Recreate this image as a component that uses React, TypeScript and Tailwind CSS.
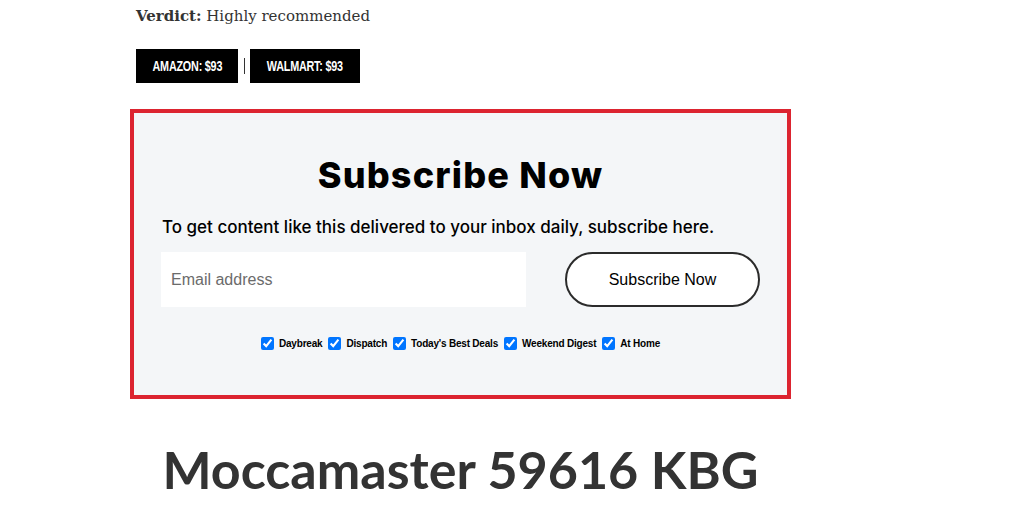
import { useState } from 'react';

const lists = ['Daybreak', 'Dispatch', "Today's Best Deals", 'Weekend Digest', 'At Home'];

function Newsletter() {
  const [checked, setChecked] = useState<Record<string, boolean>>(
    Object.fromEntries(lists.map((l) => [l, true]))
  );

  return (
    <div className="border-4 border-[#dc2430] bg-[#f4f6f8] px-[27px] pt-[40px] pb-[44px]">
      <h2 className="text-center text-[36px] leading-[44px] font-extrabold text-black tracking-[1.2px] [font-family:Inter,sans-serif]">
        Subscribe Now
      </h2>
      <p className="mt-[19px] pl-[1px] text-[17px] leading-[22px] font-medium text-black [font-family:Inter,sans-serif]">
        To get content like this delivered to your inbox daily, subscribe here.
      </p>
      <div className="mt-[14px] flex items-center justify-between">
        <input
          type="email"
          placeholder="Email address"
          className="h-[55px] w-[365px] bg-white px-[10px] text-[16px] text-[#333] placeholder:text-[#6b6b6b] outline-none [font-family:'Liberation_Sans',sans-serif]"
        />
        <button className="h-[55px] w-[195px] rounded-full border-2 border-[#2b2b2b] bg-white text-[16px] text-black [font-family:'Liberation_Sans',sans-serif]">
          Subscribe Now
        </button>
      </div>
      <div className="mt-[29px] flex items-center justify-center gap-[6px]">
        {lists.map((l) => (
          <label key={l} className="flex items-center gap-[5px] cursor-pointer">
            <input
              type="checkbox"
              checked={checked[l]}
              onChange={() => setChecked({ ...checked, [l]: !checked[l] })}
              className="m-0 h-[13px] w-[13px] accent-[#0075ff]"
            />
            <span className="text-[10px] font-bold text-black tracking-[-0.2px] [font-family:'Liberation_Sans',sans-serif]">
              {l}
            </span>
          </label>
        ))}
      </div>
    </div>
  );
}

function ShopButton({ label, width }: { label: string; width: string }) {
  return (
    <a className={`flex h-[34px] ${width} items-center justify-center bg-black text-white`}>
      <span className="inline-block scale-x-[0.72] whitespace-nowrap text-[15px] font-bold uppercase tracking-[-0.3px] [font-family:'Liberation_Sans',sans-serif]">
        {label}
      </span>
    </a>
  );
}

export default function App() {
  return (
    <div className="min-h-[518px] bg-white">
      <div className="ml-[130px] w-[661px]">
        <p className="pl-[6px] pt-[6px] text-[15px] leading-[20px] text-[#333] [font-family:'DejaVu_Serif',serif]">
          <span className="font-bold">Verdict:</span> Highly recommended
        </p>
        <div className="mt-[23px] flex items-center pl-[6px]">
          <ShopButton label="Amazon: $93" width="w-[102px]" />
          <span className="mx-[5.5px] h-[16px] w-px bg-[#333]" />
          <ShopButton label="Walmart: $93" width="w-[110px]" />
        </div>
        <div className="mt-[26px]">
          <Newsletter />
        </div>
        <h1 className="mt-[40px] text-center text-[52px] leading-[60px] font-bold text-[#333] [font-family:Lato,sans-serif]">
          Moccamaster 59616 KBG
        </h1>
      </div>
    </div>
  );
}
